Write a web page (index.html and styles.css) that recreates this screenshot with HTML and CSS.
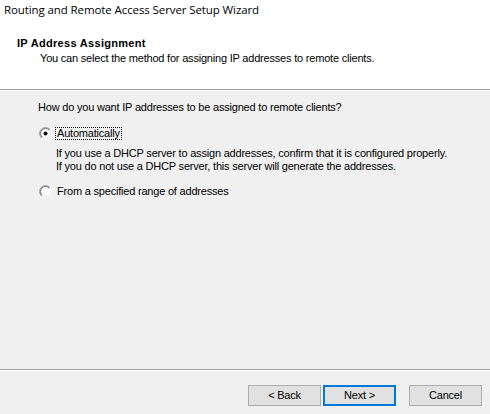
FILE: index.html
```html
<!DOCTYPE html>
<html>
<head>
<meta charset="utf-8">
<link rel="stylesheet" href="styles.css">
</head>
<body>
<div class="window">
  <div class="header">
    <div class="title">Routing and Remote Access Server Setup Wizard</div>
    <div class="heading">IP Address Assignment</div>
    <div class="subtitle">You can select the method for assigning IP addresses to remote clients.</div>
  </div>
  <div class="sep"></div>
  <div class="content">
    <div class="question">How do you want IP addresses to be assigned to remote clients?</div>
    <div class="option first">
      <svg class="radio" width="13" height="13" viewBox="0 0 13 13">
        <defs>
          <linearGradient id="g1" x1="0" y1="0" x2="1" y2="1">
            <stop offset="0.5" stop-color="#a0a0a0"/>
            <stop offset="0.5" stop-color="#ffffff"/>
          </linearGradient>
          <linearGradient id="g2" x1="0" y1="0" x2="1" y2="1">
            <stop offset="0.5" stop-color="#696969"/>
            <stop offset="0.5" stop-color="#e3e3e3"/>
          </linearGradient>
        </defs>
        <circle cx="6.5" cy="6.5" r="6" fill="none" stroke="url(#g1)" stroke-width="1"/>
        <circle cx="6.5" cy="6.5" r="5" fill="#ffffff" stroke="url(#g2)" stroke-width="1"/>
        <circle cx="6.5" cy="6.5" r="2" fill="#000000"/>
      </svg>
      <span class="label focus">Automatically</span>
    </div>
    <div class="desc">
      <div>If you use a DHCP server to assign addresses, confirm that it is configured properly.</div>
      <div>If you do not use a DHCP server, this server will generate the addresses.</div>
    </div>
    <div class="option second">
      <svg class="radio" width="13" height="13" viewBox="0 0 13 13">
        <circle cx="6.5" cy="6.5" r="6" fill="none" stroke="url(#g1)" stroke-width="1"/>
        <circle cx="6.5" cy="6.5" r="5" fill="#ffffff" stroke="url(#g2)" stroke-width="1"/>
      </svg>
      <span class="label">From a specified range of addresses</span>
    </div>
  </div>
  <div class="sep"></div>
  <div class="footer">
    <button class="btn">&lt; Back</button>
    <button class="btn default">Next &gt;</button>
    <button class="btn cancel">Cancel</button>
  </div>
</div>
</body>
</html>
```
FILE: styles.css
```css
html, body {
  margin: 0;
  padding: 0;
}
body {
  width: 490px;
  height: 414px;
  overflow: hidden;
  background: #f0f0f0;
  font-family: "Liberation Sans", Arial, sans-serif;
  font-size: 11px;
  letter-spacing: -0.2px;
  color: #000;
}
.window {
  display: flex;
  flex-direction: column;
  height: 414px;
}
.header {
  background: #ffffff;
  height: 89px;
  box-sizing: border-box;
  padding-top: 2px;
}
.title {
  font-family: "Open Sans", "Noto Sans", sans-serif;
  font-size: 11.5px;
  letter-spacing: -0.1px;
  line-height: 16px;
  padding-left: 4px;
}
.heading {
  font-weight: bold;
  letter-spacing: 0.3px;
  line-height: 13px;
  margin-top: 19px;
  padding-left: 17px;
}
.subtitle {
  line-height: 13px;
  margin-top: 2px;
  padding-left: 40px;
}
.sep {
  height: 1px;
  background: #a0a0a0;
  border-bottom: 1px solid #ffffff;
  flex: none;
}
.content {
  flex: 1;
  padding: 10px 0 0 38px;
  line-height: 13px;
}
.option {
  display: flex;
  align-items: center;
  height: 13px;
}
.option.first {
  margin-top: 13px;
}
.option.second {
  margin-top: 12px;
}
.radio {
  flex: none;
  margin-left: 1px;
}
.label {
  margin-left: 3px;
  line-height: 11px;
  padding: 0 1px;
  border: 1px solid transparent;
}
.label.focus {
  border: 1px dotted #000;
}
.desc {
  margin-top: 7px;
  padding-left: 18px;
}
.footer {
  height: 43px;
  flex: none;
  box-sizing: border-box;
  padding: 14px 8px 0 0;
  display: flex;
  justify-content: flex-end;
  align-items: flex-start;
}
.btn {
  width: 73px;
  height: 21px;
  box-sizing: border-box;
  margin: 0;
  padding: 0;
  background: #e1e1e1;
  border: 1px solid #adadad;
  font-family: "Liberation Sans", Arial, sans-serif;
  font-size: 11px;
  letter-spacing: -0.2px;
  color: #000;
  line-height: 13px;
}
.btn.default {
  margin-left: 2px;
  border: 2px solid #0078d7;
}
.btn.cancel {
  margin-left: 13px;
}
```
